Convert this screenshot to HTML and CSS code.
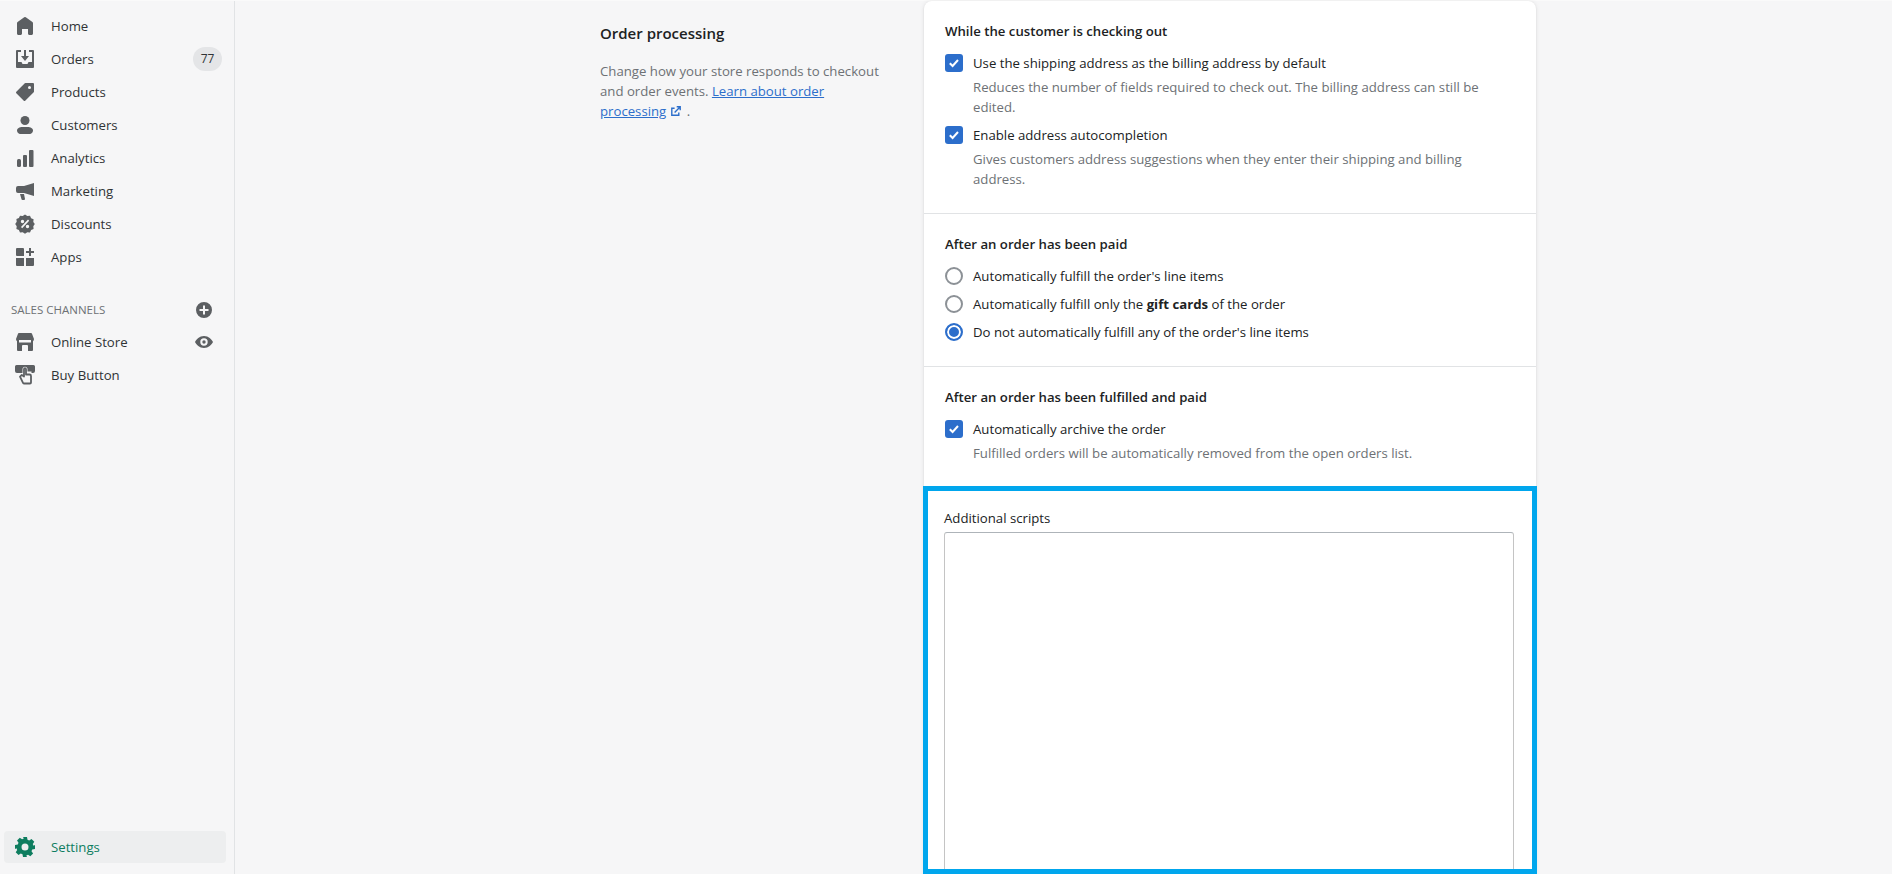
FILE: index.html
```html
<!DOCTYPE html>
<html lang="en">
<head>
    <meta charset="UTF-8">
    <title>Checkout settings</title>
    <link rel="stylesheet" href="styles.css">
</head>
<body>
    <div class="frame">
        <nav class="sidebar">
            <ul class="nav-list">
                <li class="nav-item">
                    <svg class="nav-icon" viewBox="0 0 20 20"><path d="M18 7.300V17.500c0 .8-.7 1.500-1.500 1.500h-2c-.8 0-1.500-.7-1.500-1.500V13H7v4.500C7 18.300 6.300 19 5.500 19h-2C2.700 19 2 18.300 2 17.500V7.300c0-.5.2-.9.6-1.200l6.600-4.900a1.500 1.500 0 0 1 1.600 0l6.600 4.900c.4.300.6.700.6 1.200z"/></svg>
                    <span>Home</span>
                </li>
                <li class="nav-item">
                    <svg class="nav-icon" viewBox="0 0 20 20"><path d="M2 1h4v2H3v10h3.500l1 2h5l1-2H17V3h-3V1h4a1 1 0 0 1 1 1v16a1 1 0 0 1-1 1H2a1 1 0 0 1-1-1V2a1 1 0 0 1 1-1z"/><path d="M9 1h2v6h3l-4 5-4-5h3z"/></svg>
                    <span>Orders</span>
                    <span class="count">77</span>
                </li>
                <li class="nav-item">
                    <svg class="nav-icon" viewBox="0 0 20 20"><path fill-rule="evenodd" d="M18 1h-7.500a1 1 0 0 0-.7.3l-8.500 8.500a1 1 0 0 0 0 1.400l7.500 7.500a1 1 0 0 0 1.400 0l8.500-8.500a1 1 0 0 0 .3-.7V2a1 1 0 0 0-1-1zm-3.500 6a1.500 1.500 0 1 1 0-3 1.500 1.500 0 0 1 0 3z"/></svg>
                    <span>Products</span>
                </li>
                <li class="nav-item">
                    <svg class="nav-icon" viewBox="0 0 20 20"><circle cx="10" cy="5.500" r="4.500"/><path d="M7.500 12h5c3 0 5.500 1.300 5.500 3.500S16 19 15 19H5c-1 0-3-1.300-3-3.500S4.500 12 7.500 12z"/></svg>
                    <span>Customers</span>
                </li>
                <li class="nav-item">
                    <svg class="nav-icon" viewBox="0 0 20 20"><rect x="2" y="11" width="4" height="8" rx="1.500"/><rect x="8" y="7" width="4" height="12" rx="1"/><rect x="14" y="2" width="4.500" height="17" rx="1"/></svg>
                    <span>Analytics</span>
                </li>
                <li class="nav-item">
                    <svg class="nav-icon" viewBox="0 0 20 20"><path d="M19 2v13l-10-3H3a2 2 0 0 1-2-2V7a2 2 0 0 1 2-2h6z"/><path d="M5 13h4l1 5a1 1 0 0 1-1 1H7.500a1 1 0 0 1-1-.8z"/></svg>
                    <span>Marketing</span>
                </li>
                <li class="nav-item">
                    <svg class="nav-icon" viewBox="0 0 20 20"><path fill-rule="evenodd" d="M10 .5l2.300 1.500 2.700-.3 1.100 2.500 2.500 1.100-.3 2.700L19.800 10l-1.500 2.300.3 2.700-2.500 1.100-1.100 2.500-2.700-.3L10 19.800l-2.300-1.500-2.700.3-1.100-2.500-2.500-1.100.3-2.700L.2 10l1.500-2.300-.3-2.700 2.500-1.100L5 1.700l2.700.3zM7.500 5.800a1.700 1.700 0 1 0 0 3.400 1.700 1.700 0 0 0 0-3.400zm5 5a1.700 1.700 0 1 0 0 3.400 1.700 1.700 0 0 0 0-3.400zM13 5.500l-7 7.500 1.200 1.200 7-7.500z"/></svg>
                    <span>Discounts</span>
                </li>
                <li class="nav-item">
                    <svg class="nav-icon" viewBox="0 0 20 20"><path d="M1 2a1 1 0 0 1 1-1h6a1 1 0 0 1 1 1v7H2a1 1 0 0 1-1-1zM1 11h8v8H2a1 1 0 0 1-1-1zM11 11h8v7a1 1 0 0 1-1 1h-7zM14 1h2v3h3v2h-3v3h-2V6h-3V4h3z"/></svg>
                    <span>Apps</span>
                </li>
            </ul>

            <div class="channels-head">
                <span>SALES CHANNELS</span>
                <svg class="side-action" viewBox="0 0 20 20"><path fill-rule="evenodd" d="M10 2a8 8 0 1 0 0 16 8 8 0 0 0 0-16zm-1 3.500h2V9h3.500v2H11v3.500H9V11H5.500V9H9z"/></svg>
            </div>

            <ul class="nav-list">
                <li class="nav-item">
                    <svg class="nav-icon" viewBox="0 0 20 20"><path d="M4 1h12a1 1 0 0 1 1 .7L19 7a3 3 0 0 1-1 2.300V18a1 1 0 0 1-1 1h-4v-5a1 1 0 0 0-1-1H8a1 1 0 0 0-1 1v5H3a1 1 0 0 1-1-1V9.300A3 3 0 0 1 1 7l2-5.300A1 1 0 0 1 4 1zM4 8v2.500h12V8z"/></svg>
                    <span>Online Store</span>
                    <svg class="side-action eye" viewBox="0 0 20 20"><path fill-rule="evenodd" d="M10 4c4.500 0 7.700 3.300 9 6-1.300 2.700-4.500 6-9 6s-7.700-3.300-9-6c1.300-2.700 4.500-6 9-6zm0 2.300a3.700 3.700 0 1 0 0 7.400 3.700 3.700 0 0 0 0-7.400zm0 2a1.700 1.700 0 1 1 0 3.400 1.700 1.700 0 0 1 0-3.400z"/></svg>
                </li>
                <li class="nav-item">
                    <svg class="nav-icon buy-icon" viewBox="0 0 20 20"><path d="M1.500 0h17A1.500 1.500 0 0 1 20 1.500V6a2 2 0 0 1-2 2h-1.500V6.500h-4V4.200a2.500 2.500 0 0 0-5 0V8H2a2 2 0 0 1-2-2V1.500A1.500 1.500 0 0 1 1.500 0z"/><path class="buy-hand" d="M9 4.200v7.300L6.800 10 5 11.600l3 6.300a1 1 0 0 0 .9.600h6.100a1 1 0 0 0 1-1V11a1.500 1.500 0 0 0-1.500-1.500H11V4.200a1 1 0 0 0-2 0z"/></svg>
                    <span>Buy Button</span>
                </li>
            </ul>

            <div class="nav-item settings">
                <svg class="nav-icon" viewBox="0 0 20 20"><path fill-rule="evenodd" d="M8 0h4l.5 2.800 1.700.7L16.500 2l2.800 2.800-1.500 2.300.7 1.700L20 8v4l-2.800.5-.7 1.700 1.600 2.300-2.800 2.800-2.300-1.500-1.700.7L12 20H8l-.5-2.800-1.700-.7L3.500 18 .7 15.200l1.500-2.300-.7-1.700L0 12V8l2.800-.5.7-1.700L2 3.500 4.800.7l2.300 1.500 1.700-.7zM10 6.500a3.500 3.500 0 1 0 0 7 3.500 3.500 0 0 0 0-7z"/></svg>
                <span>Settings</span>
            </div>
        </nav>

        <main class="content">
            <div class="annotation">
                <h2>Order processing</h2>
                <p>Change how your store responds to checkout and order events. <a href="#">Learn about order processing<svg class="ext-icon" viewBox="0 0 20 20"><path d="M11 3h6v6h-2V6.400l-6.300 6.300-1.400-1.400L13.600 5H11z"/><path d="M3 5h5v2H5v8h8v-3h2v5H3z"/></svg></a> .</p>
            </div>

            <div class="card">
                <section class="card-section">
                    <h3>While the customer is checking out</h3>
                    <div class="option">
                        <span class="checkbox"><svg viewBox="0 0 18 18"><path d="M4.800 9.200l2.800 2.800 5.400-6"/></svg></span>
                        <div>
                            <div class="option-label">Use the shipping address as the billing address by default</div>
                            <div class="option-help">Reduces the number of fields required to check out. The billing address can still be edited.</div>
                        </div>
                    </div>
                    <div class="option">
                        <span class="checkbox"><svg viewBox="0 0 18 18"><path d="M4.800 9.200l2.800 2.800 5.400-6"/></svg></span>
                        <div>
                            <div class="option-label">Enable address autocompletion</div>
                            <div class="option-help">Gives customers address suggestions when they enter their shipping and billing address.</div>
                        </div>
                    </div>
                </section>

                <section class="card-section">
                    <h3>After an order has been paid</h3>
                    <div class="option">
                        <span class="radio"></span>
                        <div class="option-label">Automatically fulfill the order's line items</div>
                    </div>
                    <div class="option">
                        <span class="radio"></span>
                        <div class="option-label">Automatically fulfill only the <strong>gift cards</strong> of the order</div>
                    </div>
                    <div class="option">
                        <span class="radio selected"></span>
                        <div class="option-label">Do not automatically fulfill any of the order's line items</div>
                    </div>
                </section>

                <section class="card-section last">
                    <h3>After an order has been fulfilled and paid</h3>
                    <div class="option">
                        <span class="checkbox"><svg viewBox="0 0 18 18"><path d="M4.800 9.200l2.800 2.800 5.400-6"/></svg></span>
                        <div>
                            <div class="option-label">Automatically archive the order</div>
                            <div class="option-help">Fulfilled orders will be automatically removed from the open orders list.</div>
                        </div>
                    </div>
                </section>

                <section class="scripts-section">
                    <label class="scripts-label" for="scripts">Additional scripts</label>
                    <textarea id="scripts" class="scripts-input"></textarea>
                </section>
            </div>
        </main>
    </div>
</body>
</html>
```

FILE: styles.css
```css
* {
    box-sizing: border-box;
}

html, body {
    margin: 0;
    height: 874px;
    overflow: hidden;
}

body {
    font-family: "Open Sans", "Noto Sans", sans-serif;
    font-size: 13.2px;
    line-height: 20px;
    color: #202223;
    background-color: #f6f6f7;
}

.frame {
    display: flex;
    height: 874px;
    border-top: 1px solid #fafafa;
}

.sidebar {
    display: flex;
    flex-direction: column;
    width: 235px;
    padding-top: 8px;
    border-right: 1px solid #e1e3e5;
}

.nav-list {
    list-style: none;
    margin: 0;
    padding: 0;
}

.nav-item {
    display: flex;
    align-items: center;
    gap: 16px;
    height: 33px;
    padding-left: 15px;
    color: #303335;
}

.nav-icon {
    flex: none;
    width: 20px;
    height: 20px;
    fill: #5c5f62;
}

.buy-hand {
    fill: #f6f6f7;
    stroke: #5c5f62;
    stroke-width: 1.8;
    stroke-linejoin: round;
}

.count {
    margin-left: auto;
    margin-right: 12px;
    width: 29px;
    height: 24px;
    border-radius: 12px;
    background-color: #e4e5e7;
    font-size: 12px;
    line-height: 24px;
    text-align: center;
}

.channels-head {
    display: flex;
    align-items: center;
    justify-content: space-between;
    margin-top: 22px;
    height: 30px;
    padding: 0 20px 0 11px;
    font-size: 11.5px;
    color: #6d7175;
}

.side-action {
    width: 20px;
    height: 20px;
    fill: #5c5f62;
}

.eye {
    margin-left: auto;
    margin-right: 20px;
}

.settings {
    margin: auto 8px 11px 4px;
    height: 32px;
    padding-left: 11px;
    border-radius: 4px;
    background-color: #edeeef;
    color: #0e7d5f;
}

.settings .nav-icon {
    fill: #0e7d5f;
}

.content {
    flex: 1;
    display: flex;
    padding-left: 365px;
}

.annotation {
    width: 324px;
    padding-top: 20px;
}

.annotation h2 {
    margin: 0 0 16px;
    font-size: 15px;
    font-weight: 600;
    line-height: 24px;
}

.annotation p {
    margin: 0;
    width: 285px;
    color: #6d7175;
}

.annotation a {
    color: #2c6ecb;
}

.ext-icon {
    width: 14px;
    height: 14px;
    margin-left: 3px;
    vertical-align: -2px;
    fill: #2c6ecb;
}

.card {
    width: 612px;
    height: 900px;
    background-color: #fff;
    border-radius: 8px 8px 0 0;
    box-shadow: 0 0 5px rgba(23, 24, 24, 0.08), 0 1px 2px rgba(0, 0, 0, 0.1);
}

.card-section {
    padding: 20px 20px 24px 21px;
    border-bottom: 1px solid #e1e3e5;
}

.card-section.last {
    padding-bottom: 23px;
    border-bottom: none;
}

.card-section h3 {
    margin: 0 0 12px;
    font-size: 13.2px;
    font-weight: 600;
    line-height: 20px;
}

.option {
    display: flex;
    gap: 10px;
    margin-top: 8px;
}

.option-help {
    max-width: 520px;
    margin-top: 4px;
    color: #6d7175;
}

.checkbox {
    flex: none;
    width: 18px;
    height: 18px;
    margin-top: 1px;
    border-radius: 3px;
    background-color: #2c6ecb;
}

.checkbox svg {
    display: block;
    width: 18px;
    height: 18px;
    fill: none;
    stroke: #fff;
    stroke-width: 2;
}

.radio {
    flex: none;
    width: 18px;
    height: 18px;
    margin-top: 1px;
    border: 2px solid #8c9196;
    border-radius: 50%;
}

.radio.selected {
    border-color: #2c6ecb;
    background-color: #2c6ecb;
    box-shadow: inset 0 0 0 2px #fff;
}

.scripts-section {
    height: 388px;
    margin: 0 -1px;
    padding: 17px 18px 0 16px;
    border: 5px solid #00a6ed;
    overflow: hidden;
}

.scripts-label {
    display: block;
    margin-bottom: 4px;
}

.scripts-input {
    display: block;
    width: 100%;
    height: 400px;
    border: 1px solid #c4c4c4;
    border-top-color: #aeb4b9;
    border-radius: 3px;
    resize: none;
}
```
